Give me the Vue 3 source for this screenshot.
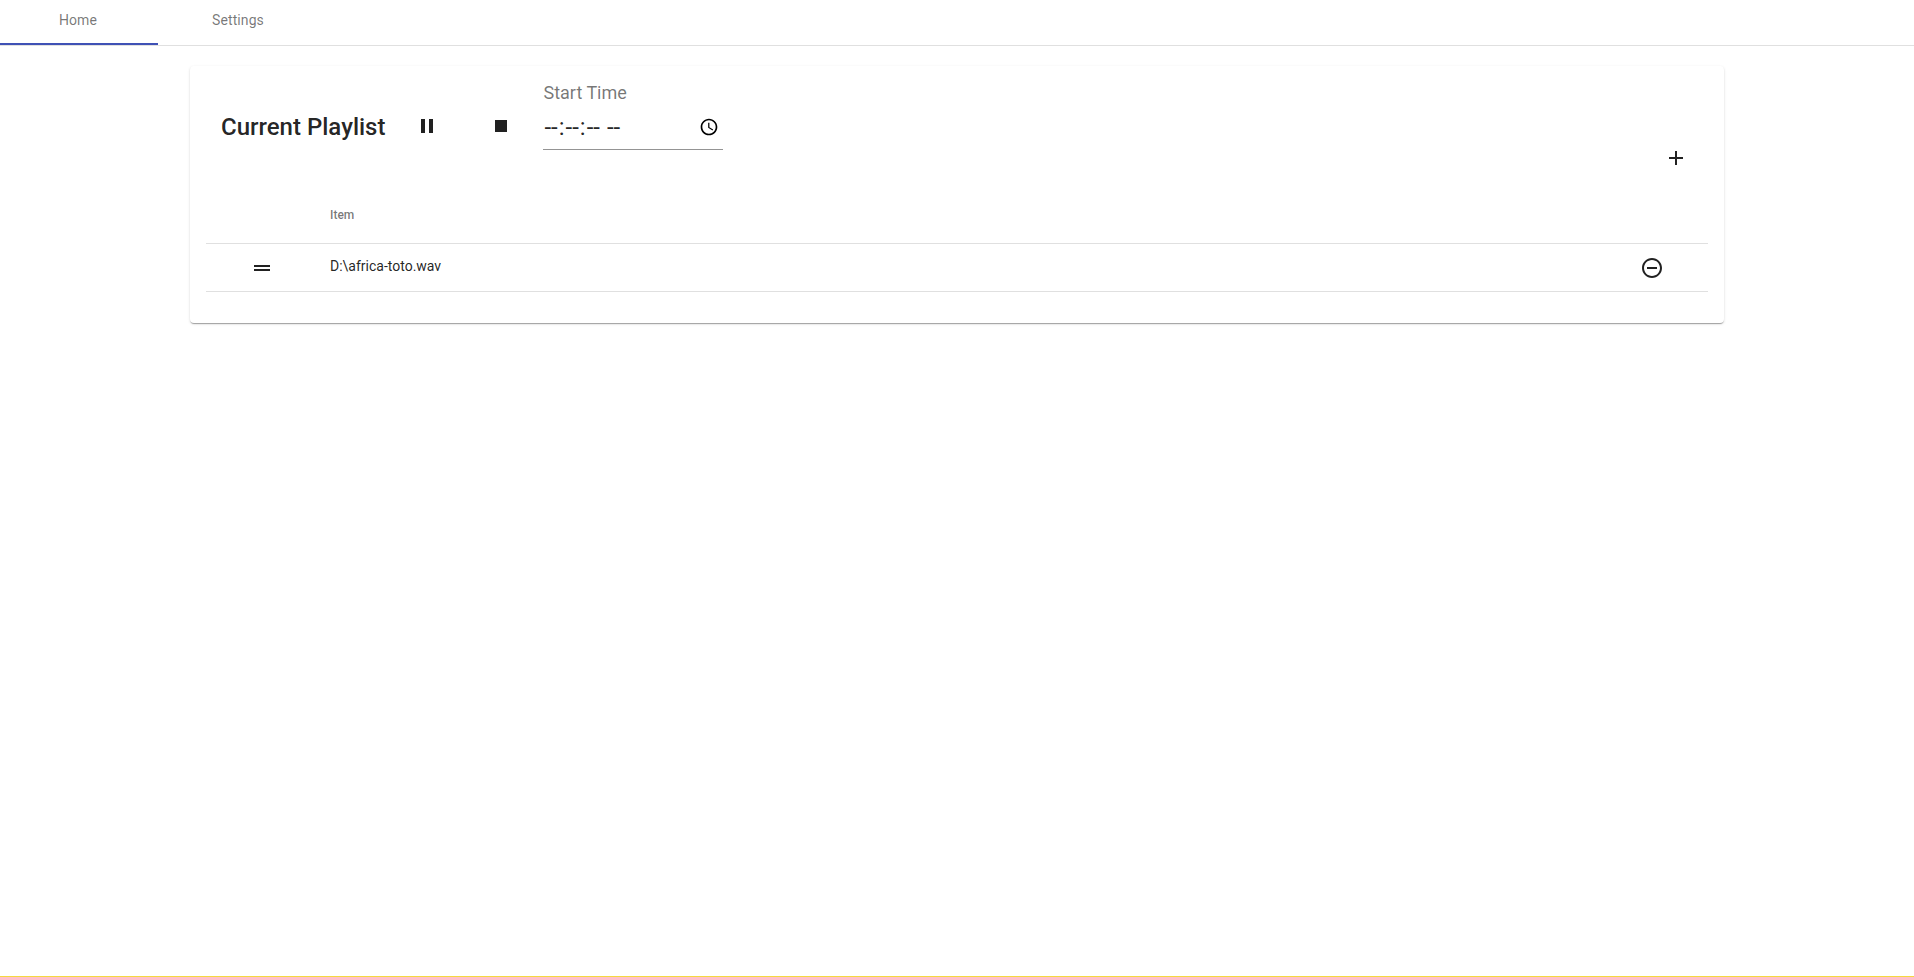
<script setup>
const tabs = [
  { label: 'Home', active: true },
  { label: 'Settings', active: false }
]
</script>

<template>
  <div class="app">
    <nav class="tabs">
      <a v-for="t in tabs" :key="t.label" class="tab" :class="{ active: t.active }">{{ t.label }}</a>
    </nav>
    <main class="main">
      <section class="card">
        <header class="head">
          <h1 class="title">Current Playlist</h1>
          <button class="icon pause" aria-label="Pause">
            <svg width="24" height="24" viewBox="0 0 24 24"><path d="M6 19h4V5H6v14zm8-14v14h4V5h-4z" /></svg>
          </button>
          <button class="icon stop" aria-label="Stop">
            <svg width="24" height="24" viewBox="0 0 24 24"><path d="M6 6h12v12H6z" /></svg>
          </button>
          <div class="field">
            <label class="label" for="start-time">Start Time</label>
            <input id="start-time" class="input" type="time" step="1" />
          </div>
          <button class="icon add" aria-label="Add">
            <svg width="24" height="24" viewBox="0 0 24 24"><path d="M19 13h-6v6h-2v-6H5v-2h6V5h2v6h6v2z" /></svg>
          </button>
        </header>
        <table class="table">
          <thead>
            <tr>
              <th class="c-handle"></th>
              <th class="c-item">Item</th>
              <th class="c-remove"></th>
            </tr>
          </thead>
          <tbody>
            <tr>
              <td class="c-handle">
                <svg class="handle" width="24" height="24" viewBox="0 0 24 24"><path d="M4 9h16v2H4zm0 4h16v2H4z" /></svg>
              </td>
              <td class="c-name">D:\africa-toto.wav</td>
              <td class="c-remove">
                <svg width="24" height="24" viewBox="0 0 24 24"><path d="M7 11v2h10v-2H7zm5-9C6.48 2 2 6.48 2 12s4.48 10 10 10 10-4.48 10-10S17.52 2 12 2zm0 18c-4.41 0-8-3.59-8-8s3.59-8 8-8 8 3.59 8 8-3.59 8-8 8z" /></svg>
              </td>
            </tr>
          </tbody>
        </table>
      </section>
    </main>
    <footer class="foot"></footer>
  </div>
</template>

<style>
html, body { margin: 0; background: #fff; }
</style>

<style scoped>
.app {
  height: 977px;
  display: flex;
  flex-direction: column;
  font-family: Roboto, "Liberation Sans", sans-serif;
  color: rgba(0, 0, 0, 0.87);
}
.tabs {
  display: flex;
  height: 45px;
  border-bottom: 1px solid #e0e0e0;
}
.tab {
  width: 160px;
  height: 45px;
  box-sizing: border-box;
  padding-top: 12px;
  text-align: center;
  font-size: 14px;
  line-height: 16px;
  letter-spacing: 0.1px;
  color: rgba(0, 0, 0, 0.54);
}
.tab.active {
  width: 158px;
  padding-right: 2px;
  border-bottom: 2px solid #3f51b5;
}
.main {
  flex: 1;
  padding: 20px 190px 0;
}
.card {
  width: 1534px;
  height: 257px;
  box-sizing: border-box;
  padding: 0 16px;
  background: #fff;
  border-radius: 4px;
  box-shadow: 0 2px 1px -1px rgba(0, 0, 0, 0.2), 0 1px 1px 0 rgba(0, 0, 0, 0.14), 0 1px 3px 0 rgba(0, 0, 0, 0.12);
}
.head {
  display: flex;
  align-items: flex-start;
  height: 126px;
}
.title {
  margin: 0;
  padding: 46px 0 0 15px;
  font-size: 24px;
  line-height: 30px;
  font-weight: 500;
}
button.icon {
  border: 0;
  padding: 0;
  background: none;
  width: 24px;
  height: 24px;
  color: inherit;
}
svg { display: block; fill: rgba(0, 0, 0, 0.87); }
.pause { margin: 48px 0 0 30px; }
.stop { margin: 48px 0 0 50px; }
.field {
  width: 180px;
  margin: 16px 0 0 30px;
}
.label {
  display: block;
  font-size: 18px;
  line-height: 22px;
  height: 30px;
  color: rgba(0, 0, 0, 0.54);
}
.input {
  display: block;
  width: 100%;
  height: 38px;
  box-sizing: border-box;
  padding: 0 0 8px;
  border: 0;
  border-bottom: 1px solid #949494;
  outline: 0;
  background: none;
  font-family: inherit;
  font-size: 24px;
  color: rgba(0, 0, 0, 0.87);
}
.input::-webkit-datetime-edit-ampm-field {
  margin-left: 2px;
}
.input::-webkit-calendar-picker-indicator {
  width: 20px;
  height: 20px;
  padding: 0;
  margin: 0 4px 0 0;
}
.add { margin: 80px 20px 0 auto; }
.table {
  width: 100%;
  border-collapse: collapse;
  font-size: 14px;
}
th {
  height: 51px;
  padding: 0;
  text-align: left;
  font-size: 12px;
  font-weight: 500;
  color: rgba(0, 0, 0, 0.54);
  border-bottom: 1px solid #e0e0e0;
}
.c-item { height: 45px; padding-bottom: 6px; }
td {
  height: 47px;
  padding: 0;
  border-bottom: 1px solid #e0e0e0;
}
.c-name { height: 44px; padding-bottom: 3px; }
.c-handle { width: 124px; }
.handle { margin-left: 44px; }
.c-remove { width: 68px; }
.foot { height: 1px; background: #f5d83f; }
</style>
